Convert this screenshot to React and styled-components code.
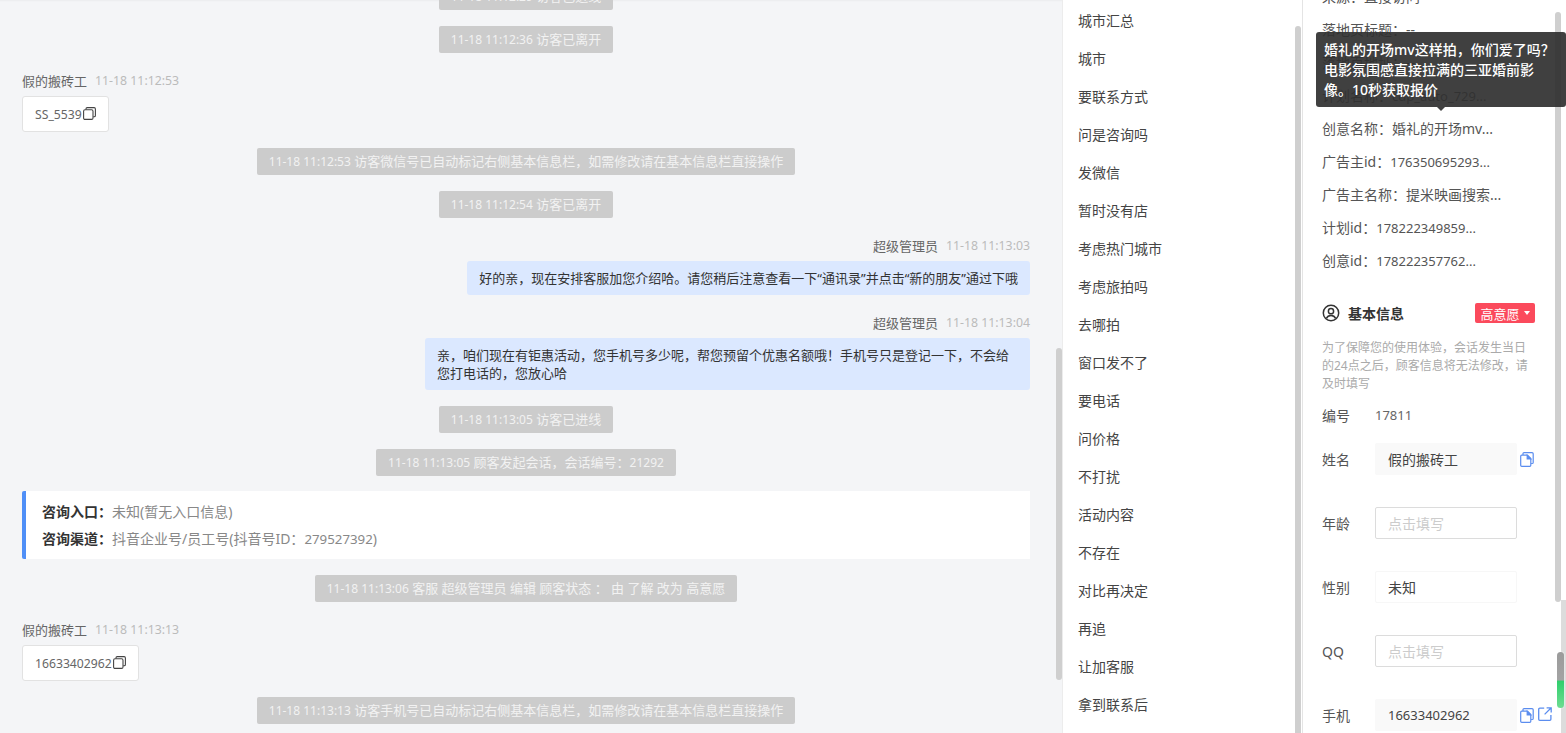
import React from "react";
import styled, { createGlobalStyle } from "styled-components";

const GlobalStyle = createGlobalStyle`
  html, body {
    margin: 0;
    padding: 0;
    height: 100%;
    overflow: hidden;
    background: #fff;
  }
  * {
    box-sizing: border-box;
  }
  body {
    font-family: "Noto Sans", "Noto Sans CJK SC", sans-serif;
    font-size: 13px;
    color: #333;
  }
`;

const Page = styled.div`
  display: flex;
  width: 1566px;
  height: 733px;
  overflow: hidden;
`;

const ChatPane = styled.section`
  position: relative;
  width: 1062px;
  height: 100%;
  flex: none;
  background: #f4f5f7;
  overflow: hidden;
  box-shadow: inset 0 3px 3px -3px rgba(0, 0, 0, 0.08);
`;

const ChatList = styled.div`
  display: flex;
  flex-direction: column;
  margin-top: -17px;
  padding: 0 32px 0 22px;
`;

const Pill = styled.div`
  align-self: center;
  height: 27px;
  line-height: 27px;
  padding: 0 12px;
  margin-bottom: 16px;
  background: #ccc;
  border-radius: 2px;
  color: #f2f2f2;
  font-size: 13px;
  white-space: nowrap;
`;

const PillNum = styled.span`
  font-size: 12px;
`;

const MetaRow = styled.div`
  display: flex;
  justify-content: ${(props) => (props.$right ? "flex-end" : "flex-start")};
  align-items: center;
  gap: 8px;
  height: 20px;
  margin-top: 1px;
  margin-bottom: 6px;
  color: #666;
  font-size: 13px;
`;

const Time = styled.span`
  color: #bbb;
  font-size: 12.3px;
`;

const CopyCard = styled.div`
  align-self: flex-start;
  display: flex;
  align-items: center;
  height: 36px;
  padding: 0 12px;
  margin-bottom: 16px;
  background: #fff;
  border: 1px solid #e2e2e2;
  border-radius: 3px;
  color: #666;
  font-size: 12.2px;
`;

const Bubble = styled.div`
  align-self: flex-end;
  padding: 8px 12px;
  margin-bottom: 16px;
  background: #dbe8ff;
  border-radius: 3px;
  color: #333;
  font-size: 13px;
  line-height: 18px;
  max-width: 605px;
`;

const InfoCard = styled.div`
  display: flex;
  flex-direction: column;
  justify-content: center;
  gap: 9px;
  height: 68px;
  padding-left: 16px;
  margin-top: -1px;
  margin-bottom: 16px;
  background: #fff;
  border-left: 4px solid #4f8ff7;
  border-radius: 2px 0 0 2px;
  color: #888;
  font-size: 14px;
  line-height: 18px;
`;

const InfoLabel = styled.b`
  color: #333;
  font-weight: 700;
`;

const InfoNum = styled.span`
  font-size: 13.3px;
`;

const Thumb = styled.div`
  position: absolute;
  left: ${(props) => props.$left}px;
  top: ${(props) => props.$top}px;
  width: 6px;
  height: ${(props) => props.$height}px;
  background: #cfcfcf;
  border-radius: 3px;
`;

const PhrasePane = styled.aside`
  position: relative;
  width: 240px;
  height: 100%;
  flex: none;
  background: #fff;
  border-left: 1px solid #ececec;
  overflow: hidden;
`;

const PhraseList = styled.ul`
  list-style: none;
  margin: 0;
  padding: 2px 0 0 15px;
`;

const Phrase = styled.li`
  height: 38px;
  line-height: 38px;
  color: #444;
  font-size: 14px;
`;

const InfoPane = styled.aside`
  position: relative;
  flex: 1;
  height: 100%;
  background: #fff;
  border-left: 1px solid #e4e4e4;
  overflow: hidden;
`;

const InfoScroll = styled.div`
  margin-top: -20px;
  padding: 0 0 0 19px;
`;

const SourceRow = styled.div`
  height: 33px;
  line-height: 33px;
  color: #555;
  font-size: 14px;
  white-space: nowrap;
`;

const SourceValue = styled.span`
  font-size: ${(props) => (props.$latin ? "13px" : "14px")};
`;

const SectionHead = styled.div`
  display: flex;
  align-items: center;
  width: 213px;
  height: 20px;
  margin: 26px 0 16px;
`;

const SectionTitle = styled.h3`
  flex: 1;
  margin: 0 0 0 8px;
  color: #333;
  font-size: 14px;
  font-weight: 700;
`;

const StatusBadge = styled.div`
  display: flex;
  align-items: center;
  justify-content: center;
  gap: 4px;
  width: 60px;
  height: 20px;
  background: #fb4a5c;
  border-radius: 2px;
  color: #fff;
  font-size: 13px;
`;

const Caret = styled.i`
  width: 0;
  height: 0;
  border-left: 3px solid transparent;
  border-right: 3px solid transparent;
  border-top: 4px solid #fff;
`;

const Hint = styled.p`
  width: 210px;
  margin: 0 0 12px;
  color: #aaa;
  font-size: 12px;
  line-height: 18px;
`;

const PlainRow = styled.div`
  display: flex;
  align-items: center;
  height: 20px;
  margin-bottom: 18px;
  color: #666;
  font-size: 13px;
`;

const FormRow = styled.div`
  display: flex;
  align-items: center;
  height: 32px;
  margin-bottom: 32px;
`;

const Label = styled.label`
  width: 53px;
  flex: none;
  color: #555;
  font-size: 14px;
`;

const Field = styled.div`
  display: flex;
  align-items: center;
  width: 142px;
  height: 32px;
  padding: 0 12px;
  flex: none;
  border-radius: 2px;
  font-size: ${(props) => (props.$latin ? "13px" : "14px")};
  border: 1px solid
    ${(props) =>
      props.$variant === "empty"
        ? "#dcdcdc"
        : props.$variant === "select"
        ? "#f7f7f7"
        : "#f9f9f9"};
  background: ${(props) => (props.$variant === "filled" ? "#f9f9f9" : "#fff")};
  color: ${(props) => (props.$variant === "empty" ? "#ccc" : "#444")};
`;

const FieldActions = styled.div`
  display: flex;
  align-items: center;
  gap: 4px;
  margin-left: 3px;
  color: #5b8def;
`;

const PageRail = styled.div`
  position: absolute;
  left: 258px;
  top: 600px;
  bottom: 0;
  width: 5px;
  background: #dcdcdc;
`;

const MiniBar = styled.div`
  position: absolute;
  left: 254px;
  top: 652px;
  width: 7px;
  height: 56px;
  border-radius: 4px;
  overflow: hidden;
  box-shadow: 0 0 2px #fff;
  background: linear-gradient(
    to bottom,
    #9b9b9b 0,
    #a3a3a3 50%,
    #2fcf6c 52%,
    #6fdc92 100%
  );
`;

const Tooltip = styled.div`
  position: absolute;
  left: 13px;
  top: 32px;
  width: 250px;
  height: 75px;
  padding: 8px;
  background: rgba(48, 48, 48, 0.92);
  border-radius: 3px;
  color: #fff;
  font-size: 14px;
  font-weight: 500;
  line-height: 20px;

  &::after {
    content: "";
    position: absolute;
    left: 121px;
    bottom: -4px;
    border-left: 4px solid transparent;
    border-right: 4px solid transparent;
    border-top: 4px solid rgba(48, 48, 48, 0.92);
  }
`;

const CopyGlyph = () => (
  <svg width="13" height="13" viewBox="0 0 13 13" fill="none" stroke="#444" strokeWidth="1.1" style={{ marginLeft: 1, marginTop: -2 }}>
    <rect x="0.6" y="2.8" width="9.4" height="9.6" rx="1.4" />
    <path d="M3 2.6V1.8C3 1.1 3.5.6 4.2.6h6.9c.7 0 1.3.6 1.3 1.3v6.6c0 .7-.5 1.3-1.2 1.3h-1" />
  </svg>
);

const DocIcon = () => (
  <svg width="14" height="15" viewBox="0 0 14 15" fill="none" stroke="currentColor" strokeWidth="1.2">
    <path d="M3 3V1.6C3 1 3.4.7 4 .7h8c.6 0 1.2.5 1.2 1.1v8.6c0 .6-.5 1.1-1.1 1.1h-1" />
    <path d="M.7 4.2c0-.6.5-1 1-1h5.8l3.3 3.3v6.8c0 .6-.5 1-1 1H1.7c-.5 0-1-.4-1-1z" fill="#fff" />
    <path d="M7.2 3.4v3.500h3.500z" fill="currentColor" />
  </svg>
);

const OpenIcon = () => (
  <svg width="14" height="14" viewBox="0 0 14 14" fill="none" stroke="currentColor" strokeWidth="1.3" style={{ marginTop: -2 }}>
    <path d="M6.2 1.2H1.8C1.2 1.2.7 1.7.7 2.3v9.9c0 .6.5 1.1 1.1 1.1h10c.6 0 1.1-.5 1.1-1.1V8" />
    <path d="M8.6.8h4.6v4.6M13 1L6.6 7.4" />
  </svg>
);

const UserCircle = () => (
  <svg width="18" height="18" viewBox="0 0 18 18" fill="none" stroke="#333" strokeWidth="1.5">
    <circle cx="9" cy="9" r="7.7" />
    <circle cx="9" cy="7.2" r="2.6" />
    <path d="M4.4 14.4c.8-2 2.5-3 4.6-3s3.800 1 4.600 3" />
  </svg>
);

const phrases = [
  "城市汇总",
  "城市",
  "要联系方式",
  "问是咨询吗",
  "发微信",
  "暂时没有店",
  "考虑热门城市",
  "考虑旅拍吗",
  "去哪拍",
  "窗口发不了",
  "要电话",
  "问价格",
  "不打扰",
  "活动内容",
  "不存在",
  "对比再决定",
  "再追",
  "让加客服",
  "拿到联系后",
];

const sources = [
  { label: "来源：", value: "直接访问" },
  { label: "落地页标题：", value: "--" },
  { label: "落地页地址：", value: "--" },
  { label: "计划名称：", value: "cdp_auto_729...", latin: true },
  { label: "创意名称：", value: "婚礼的开场mv..." },
  { label: "广告主id：", value: "176350695293...", latin: true },
  { label: "广告主名称：", value: "提米映画搜索..." },
  { label: "计划id：", value: "178222349859...", latin: true },
  { label: "创意id：", value: "178222357762...", latin: true },
];

export default function App() {
  return (
    <Page>
      <GlobalStyle />
      <ChatPane>
        <ChatList>
          <Pill><PillNum>11-18 11:12:29</PillNum> 访客已进线</Pill>
          <Pill><PillNum>11-18 11:12:36</PillNum> 访客已离开</Pill>
          <MetaRow>
            假的搬砖工<Time>11-18 11:12:53</Time>
          </MetaRow>
          <CopyCard>
            SS_5539
            <CopyGlyph />
          </CopyCard>
          <Pill><PillNum>11-18 11:12:53</PillNum> 访客微信号已自动标记右侧基本信息栏，如需修改请在基本信息栏直接操作</Pill>
          <Pill><PillNum>11-18 11:12:54</PillNum> 访客已离开</Pill>
          <MetaRow $right>
            超级管理员<Time>11-18 11:13:03</Time>
          </MetaRow>
          <Bubble>好的亲，现在安排客服加您介绍哈。请您稍后注意查看一下“通讯录”并点击“新的朋友”通过下哦</Bubble>
          <MetaRow $right>
            超级管理员<Time>11-18 11:13:04</Time>
          </MetaRow>
          <Bubble>
            亲，咱们现在有钜惠活动，您手机号多少呢，帮您预留个优惠名额哦！手机号只是登记一下，不会给您打电话的，您放心哈
          </Bubble>
          <Pill><PillNum>11-18 11:13:05</PillNum> 访客已进线</Pill>
          <Pill><PillNum>11-18 11:13:05</PillNum> 顾客发起会话，会话编号：<PillNum>21292</PillNum></Pill>
          <InfoCard>
            <div>
              <InfoLabel>咨询入口：</InfoLabel>未知(暂无入口信息)
            </div>
            <div>
              <InfoLabel>咨询渠道：</InfoLabel>抖音企业号/员工号(抖音号ID：<InfoNum>279527392</InfoNum>)
            </div>
          </InfoCard>
          <Pill><PillNum>11-18 11:13:06</PillNum> 客服 超级管理员 编辑 顾客状态 ： 由 了解 改为 高意愿</Pill>
          <MetaRow>
            假的搬砖工<Time>11-18 11:13:13</Time>
          </MetaRow>
          <CopyCard>
            16633402962
            <CopyGlyph />
          </CopyCard>
          <Pill><PillNum>11-18 11:13:13</PillNum> 访客手机号已自动标记右侧基本信息栏，如需修改请在基本信息栏直接操作</Pill>
        </ChatList>
        <Thumb $left={1056} $top={348} $height={332} />
      </ChatPane>

      <PhrasePane>
        <PhraseList>
          {phrases.map((phrase) => (
            <Phrase key={phrase}>{phrase}</Phrase>
          ))}
        </PhraseList>
        <Thumb $left={232} $top={26} $height={720} />
      </PhrasePane>

      <InfoPane>
        <InfoScroll>
          {sources.map((row) => (
            <SourceRow key={row.label}>
              {row.label}
              <SourceValue $latin={row.latin}>{row.value}</SourceValue>
            </SourceRow>
          ))}
          <SectionHead>
            <UserCircle />
            <SectionTitle>基本信息</SectionTitle>
            <StatusBadge>
              高意愿
              <Caret />
            </StatusBadge>
          </SectionHead>
          <Hint>为了保障您的使用体验，会话发生当日的24点之后，顾客信息将无法修改，请及时填写</Hint>
          <PlainRow>
            <Label>编号</Label>17811
          </PlainRow>
          <FormRow>
            <Label>姓名</Label>
            <Field $variant="filled">假的搬砖工</Field>
            <FieldActions>
              <DocIcon />
            </FieldActions>
          </FormRow>
          <FormRow>
            <Label>年龄</Label>
            <Field $variant="empty">点击填写</Field>
          </FormRow>
          <FormRow>
            <Label>性别</Label>
            <Field $variant="select">未知</Field>
          </FormRow>
          <FormRow>
            <Label>QQ</Label>
            <Field $variant="empty">点击填写</Field>
          </FormRow>
          <FormRow>
            <Label>手机</Label>
            <Field $variant="filled" $latin>16633402962</Field>
            <FieldActions>
              <DocIcon />
              <OpenIcon />
            </FieldActions>
          </FormRow>
        </InfoScroll>
        <Thumb $left={252} $top={12} $height={590} />
        <PageRail />
        <MiniBar />
        <Tooltip>婚礼的开场mv这样拍，你们爱了吗？电影氛围感直接拉满的三亚婚前影像。10秒获取报价</Tooltip>
      </InfoPane>
    </Page>
  );
}
